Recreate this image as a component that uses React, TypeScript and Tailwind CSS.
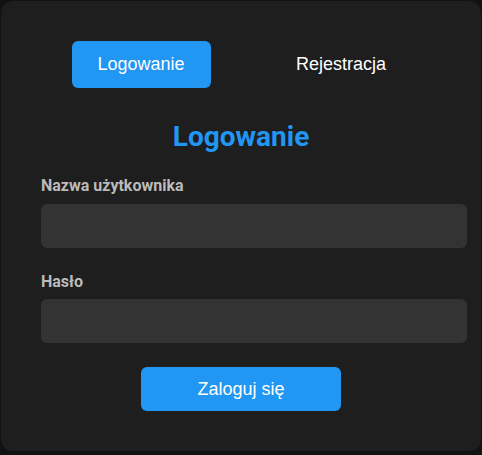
import React, { useState } from 'react';

const App = () => {
  const [tab, setTab] = useState<'login' | 'register'>('login');
  const [username, setUsername] = useState('');
  const [password, setPassword] = useState('');

  return (
    <div className="min-h-screen w-[482px] h-[455px] bg-[#121212] p-px">
      <div className="h-[450px] rounded-xl bg-[#1e1e1e] px-10 pt-10">
        <div className="flex justify-center gap-[61px]">
          <button
            onClick={() => setTab('login')}
            className={`w-[139px] h-[47px] rounded-md text-[18px] text-white font-['Liberation_Sans',Arial,sans-serif] ${tab === 'login' ? 'bg-[#2196f3]' : ''}`}
          >
            Logowanie
          </button>
          <button
            onClick={() => setTab('register')}
            className={`w-[139px] h-[47px] rounded-md text-[18px] text-white font-['Liberation_Sans',Arial,sans-serif] ${tab === 'register' ? 'bg-[#2196f3]' : ''}`}
          >
            Rejestracja
          </button>
        </div>

        <h2 className="mt-8 text-center text-[28px] leading-[34px] font-bold text-[#2196f3] font-['Roboto',sans-serif]">
          Logowanie
        </h2>

        <form className="flex flex-col" onSubmit={(e) => e.preventDefault()}>
          <label className="mt-[22px] text-[16px] leading-5 font-bold text-[#bbbbbb] font-['Roboto',sans-serif]">
            Nazwa użytkownika
          </label>
          <input
            type="text"
            value={username}
            onChange={(e) => setUsername(e.target.value)}
            className="mt-2 w-[426px] h-11 rounded-md bg-[#333333] px-3 text-white outline-none"
          />
          <label className="mt-6 text-[16px] leading-5 font-bold text-[#bbbbbb] font-['Roboto',sans-serif]">
            Hasło
          </label>
          <input
            type="password"
            value={password}
            onChange={(e) => setPassword(e.target.value)}
            className="mt-[7px] w-[426px] h-11 rounded-md bg-[#333333] px-3 text-white outline-none"
          />
          <button
            type="submit"
            className="mt-6 self-center w-[200px] h-11 rounded-md bg-[#2196f3] text-[18px] text-white font-['Liberation_Sans',Arial,sans-serif]"
          >
            Zaloguj się
          </button>
        </form>
      </div>
    </div>
  );
};

export default App;
